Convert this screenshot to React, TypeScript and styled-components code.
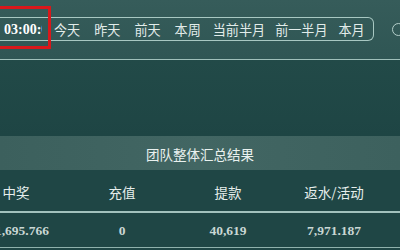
import React from "react";
import styled, { createGlobalStyle } from "styled-components";

const GlobalStyle = createGlobalStyle`
  html, body {
    margin: 0;
    padding: 0;
  }
  body {
    width: 400px;
    height: 250px;
    overflow: hidden;
    background: #1f4645;
    font-family: "Noto Sans CJK SC", "Noto Sans", sans-serif;
  }
`;

const Page = styled.div`
  display: flex;
  flex-direction: column;
  width: 400px;
  height: 250px;
  overflow: hidden;
`;

const TopBar = styled.div`
  position: relative;
  box-sizing: border-box;
  height: 60px;
  display: flex;
  align-items: flex-start;
  padding-top: 17px;
  background: linear-gradient(180deg, #365c5a 0%, #2f5654 100%);
  border-bottom: 1px solid #9fc0ba;
`;

const RangeBox = styled.div`
  box-sizing: border-box;
  flex: none;
  display: flex;
  align-items: center;
  height: 24px;
  margin-left: -10px;
  padding-left: 14px;
  padding-right: 2px;
  border: 1px solid #a8c8c2;
  border-left: none;
  border-radius: 0 6px 6px 0;
`;

const TimeField = styled.div`
  flex: none;
  width: 38px;
  margin-right: 5px;
  overflow: hidden;
  white-space: nowrap;
  font-family: "Liberation Serif", "DejaVu Serif", serif;
  font-weight: 700;
  font-size: 14px;
  color: #ffffff;
  line-height: 22px;
  padding-top: 1px;
`;

const QuickButton = styled.button<{ $pad: number }>`
  flex: none;
  white-space: nowrap;
  background: none;
  border: none;
  margin: 0;
  padding: 0 ${(p) => p.$pad}px;
  font-family: "Noto Sans CJK SC", sans-serif;
  font-size: 13.1px;
  line-height: 22px;
  padding-top: 2px;
  color: #e2ecea;
  cursor: pointer;
`;

const Radio = styled.span`
  box-sizing: border-box;
  flex: none;
  width: 13px;
  height: 13px;
  margin-left: 18px;
  margin-top: 6px;
  border: 1.5px solid #b4cfca;
  border-radius: 50%;
`;

const Highlight = styled.div`
  position: absolute;
  left: -10px;
  top: 6px;
  width: 61px;
  height: 43px;
  box-sizing: border-box;
  border: 3px solid #d8181b;
  pointer-events: none;
`;

const Spacer = styled.div`
  height: 76px;
  background: linear-gradient(180deg, #224a48 0%, #1e4544 100%);
`;

const SummaryTitle = styled.div`
  height: 33px;
  display: flex;
  align-items: center;
  justify-content: center;
  background: linear-gradient(90deg, #3c605d 0%, #426663 50%, #3d615e 100%);
  font-size: 13.5px;
  color: #e9f1ef;
  padding-top: 1px;
`;

const Table = styled.div`
  display: grid;
  grid-template-columns: repeat(5, 106px);
  margin-left: -37px;
  background: #1f4645;
`;

const HeadCell = styled.div`
  height: 43px;
  box-sizing: border-box;
  display: flex;
  align-items: center;
  justify-content: center;
  font-size: 13.5px;
  color: #e6eeec;
  border-bottom: 2px solid #a2c2bd;
  padding-top: 2px;
`;

const ValueCell = styled.div`
  height: 35px;
  box-sizing: border-box;
  display: flex;
  align-items: center;
  justify-content: center;
  font-family: "Liberation Serif", "DejaVu Serif", serif;
  font-weight: 700;
  font-size: 13.5px;
  color: #c9d7d4;
  border-bottom: 1px solid #8fb1ac;
  padding-top: 2px;
`;

const quick = [
  { label: "今天", pad: 7 },
  { label: "昨天", pad: 7 },
  { label: "前天", pad: 7 },
  { label: "本周", pad: 7 },
  { label: "当前半月", pad: 5 },
  { label: "前一半月", pad: 5 },
  { label: "本月", pad: 6 },
];

const columns = [
  { head: "中奖", value: "111,695.766" },
  { head: "充值", value: "0" },
  { head: "提款", value: "40,619" },
  { head: "返水/活动", value: "7,971.187" },
  { head: "", value: "" },
];

export default function App() {
  return (
    <>
      <GlobalStyle />
      <Page>
        <TopBar>
          <RangeBox>
            <TimeField>03:00:00</TimeField>
            {quick.map((q) => (
              <QuickButton key={q.label} $pad={q.pad}>
                {q.label}
              </QuickButton>
            ))}
          </RangeBox>
          <Radio />
          <Highlight />
        </TopBar>
        <Spacer />
        <SummaryTitle>团队整体汇总结果</SummaryTitle>
        <Table>
          {columns.map((c, i) => (
            <HeadCell key={"h" + i}>{c.head}</HeadCell>
          ))}
          {columns.map((c, i) => (
            <ValueCell key={"v" + i}>{c.value}</ValueCell>
          ))}
        </Table>
      </Page>
    </>
  );
}
